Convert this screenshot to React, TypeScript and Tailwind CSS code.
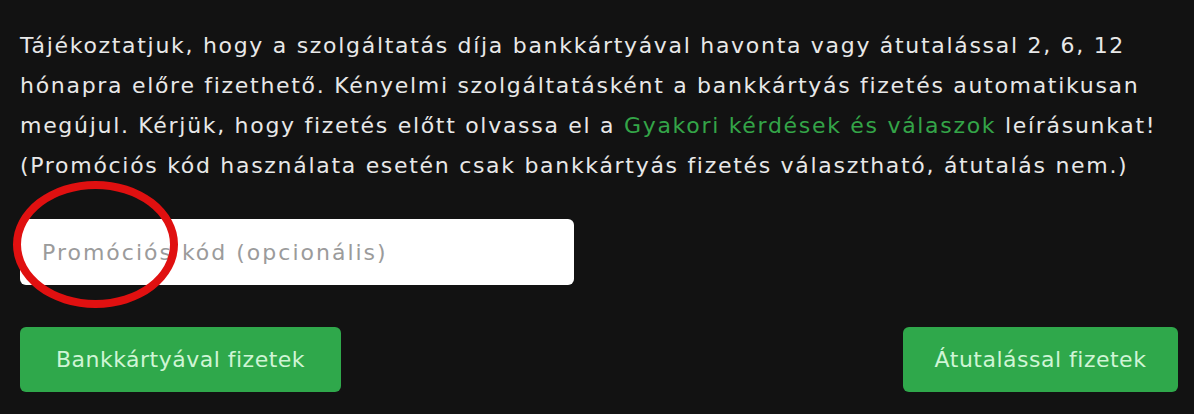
import React from "react";

const App: React.FC = () => {
  return (
    <div
      className="relative w-[1194px] h-[414px] bg-[#121212] pl-5 pr-4 pt-[26px]"
      style={{ fontFamily: '"DejaVu Sans", "Liberation Sans", sans-serif' }}
    >
      <p className="text-[22px] leading-[40px] tracking-[1.7px] text-[#e8e8e8] whitespace-nowrap">
        Tájékoztatjuk, hogy a szolgáltatás díja bankkártyával havonta vagy átutalással 2, 6, 12
        <br />
        hónapra előre fizethető. Kényelmi szolgáltatásként a bankkártyás fizetés automatikusan
        <br />
        megújul. Kérjük, hogy fizetés előtt olvassa el a{" "}
        <a className="text-[#34a548]">Gyakori kérdések és válaszok</a> leírásunkat!
        <br />
        (Promóciós kód használata esetén csak bankkártyás fizetés választható, átutalás nem.)
      </p>

      <div className="mt-[33px] w-[554px] h-[66px] rounded-md bg-white flex items-center px-[22px]">
        <input
          className="w-full bg-transparent outline-none text-[22px] tracking-[2px] text-[#333] placeholder:text-[#9b9b9b]"
          placeholder="Promóciós kód (opcionális)"
        />
      </div>

      <div className="mt-[42px] flex justify-between">
        <button className="h-[65px] w-[321px] rounded-md bg-[#2fa84b] text-[22px] tracking-[0.5px] text-[#cff5d5] flex items-center justify-center">
          Bankkártyával fizetek
        </button>
        <button className="h-[65px] w-[275px] rounded-md bg-[#2fa84b] text-[22px] tracking-[0.5px] text-[#cff5d5] flex items-center justify-center">
          Átutalással fizetek
        </button>
      </div>

      {/* red annotation ring */}
      <div className="absolute left-[13px] top-[181px] w-[165px] h-[127px] rounded-[50%] border-[8px] border-[#e01010] pointer-events-none" />
    </div>
  );
};

export default App;
